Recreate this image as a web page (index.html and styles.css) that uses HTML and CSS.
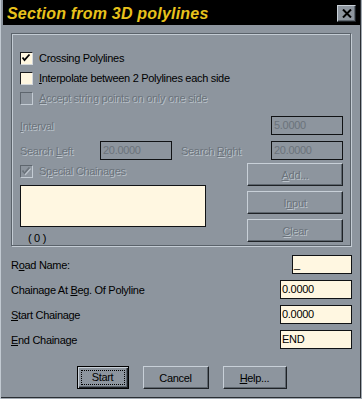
FILE: index.html
```html
<!DOCTYPE html>
<html lang="en">
<head>
    <meta charset="UTF-8">
    <meta name="viewport" content="width=device-width, initial-scale=1.0">
    <title>Section from 3D polylines</title>
    <link rel="stylesheet" href="styles.css">
</head>
<body>
    <div class="window">
        <div class="titlebar">
            <span class="title">Section from 3D polylines</span>
            <button class="close" type="button" aria-label="Close">
                <svg width="10" height="9" viewBox="0 0 10 9"><path d="M1 0.5 L9 8.5 M9 0.5 L1 8.5" stroke="#000" stroke-width="2" fill="none"/></svg>
            </button>
        </div>

        <div class="content">
            <div class="group">
                <div class="check-row">
                    <span class="box"><svg width="11" height="11" viewBox="0 0 11 11"><polyline points="1.5,4.5 3.5,7 8.5,1.5" stroke="#000" stroke-width="1.8" fill="none"/></svg></span>
                    <span>Crossing Polylines</span>
                </div>
                <div class="check-row">
                    <span class="box"></span>
                    <span><u>I</u>nterpolate between 2 Polylines each side</span>
                </div>
                <div class="check-row dis">
                    <span class="box box-dis"></span>
                    <span><u>A</u>ccept string points on only one side</span>
                </div>

                <div class="field-grid">
                    <span class="dis"><u>I</u>nterval</span>
                    <span></span>
                    <span></span>
                    <span class="inp inp-dis">5.0000</span>

                    <span class="dis">Search <u>L</u>eft</span>
                    <span class="inp inp-dis">20.0000</span>
                    <span class="dis right-label">Search <u>R</u>ight</span>
                    <span class="inp inp-dis">20.0000</span>
                </div>

                <div class="lower">
                    <div class="lower-left">
                        <div class="check-row special dis">
                            <span class="box box-dis"><svg width="11" height="11" viewBox="0 0 11 11"><polyline points="2.5,5.5 4.5,8 9.5,2.5" stroke="#bcc4cc" stroke-width="1.8" fill="none"/><polyline points="1.5,4.5 3.5,7 8.5,1.5" stroke="#6b737b" stroke-width="1.8" fill="none"/></svg></span>
                            <span>S<u>p</u>ecial Chainages</span>
                        </div>
                        <div class="listbox"></div>
                        <div class="count">( 0 )</div>
                    </div>
                    <div class="lower-right">
                        <button class="btn dis" type="button"><u>A</u>dd...</button>
                        <button class="btn dis" type="button">I<u>n</u>put</button>
                        <button class="btn dis" type="button"><u>C</u>lear</button>
                    </div>
                </div>
            </div>

            <div class="form-rows">
                <div class="form-row">
                    <span>R<u>o</u>ad Name:</span>
                    <span class="inp inp-short">_</span>
                </div>
                <div class="form-row">
                    <span>Chainage At <u>B</u>eg. Of Polyline</span>
                    <span class="inp">0.0000</span>
                </div>
                <div class="form-row">
                    <span><u>S</u>tart Chainage</span>
                    <span class="inp">0.0000</span>
                </div>
                <div class="form-row">
                    <span><u>E</u>nd Chainage</span>
                    <span class="inp">END</span>
                </div>
            </div>

            <div class="actions">
                <button class="btn btn-default btn-start" type="button"><span class="focus">Start</span></button>
                <button class="btn btn-cancel" type="button">Cancel</button>
                <button class="btn btn-help" type="button"><u>H</u>elp...</button>
            </div>
        </div>
    </div>
</body>
</html>
```

FILE: styles.css
```css
html,
body {
    margin: 0;
    padding: 0;
}

body {
    background: #8d959e;
    font-family: "Liberation Sans", Arial, sans-serif;
    font-size: 11px;
    letter-spacing: -0.3px;
    color: #000;
}

.window {
    width: 362px;
    height: 399px;
    box-sizing: border-box;
    padding: 0 2px 2px 3px;
    box-shadow: inset 1px 0 0 #c2cad2, inset -1px -1px 0 #a2aab2, inset -2px -2px 0 #2a2e33;
}

.titlebar {
    height: 25px;
    background: #000;
    display: flex;
    justify-content: space-between;
    align-items: flex-start;
    padding-left: 4px;
    overflow: hidden;
}

.title {
    font-weight: bold;
    font-style: italic;
    font-size: 16px;
    letter-spacing: 0.2px;
    line-height: 25px;
    margin-top: 1px;
    color: #e8c21c;
}

.close {
    width: 19px;
    height: 17px;
    margin: 5px 4px 0 0;
    padding: 0;
    box-sizing: border-box;
    background: #8d959e;
    border: 1px solid;
    border-color: #c8d0d8 #1e2226 #1e2226 #c8d0d8;
    box-shadow: inset -1px -1px 0 #5e666e;
    display: flex;
    align-items: center;
    justify-content: center;
}

.content {
    padding: 8px 8px 0 8px;
}

.group {
    margin-right: 1px;
    border: 1px solid #5a626a;
    box-shadow: inset 1px 1px 0 #c4ccd4, 1px 1px 0 #c4ccd4;
    padding: 14px 7px 1px 8px;
}

.check-row {
    height: 20px;
    display: flex;
    align-items: center;
}

.box {
    width: 13px;
    height: 13px;
    box-sizing: border-box;
    border: 1px solid;
    border-color: #1a1c1f #d4d8dc #d4d8dc #1a1c1f;
    background: #fff7e1;
    margin-right: 6px;
    display: flex;
}

.box-dis {
    background: transparent;
    border-color: #5e666e #c4ccd4 #c4ccd4 #5e666e;
}

.dis {
    color: #6b737b;
    text-shadow: 1px 1px 0 #bcc4cc;
}

.field-grid {
    margin-top: 8px;
    display: grid;
    grid-template-columns: 80px 72px 1fr 72px;
    grid-auto-rows: 19px;
    row-gap: 6px;
    align-items: center;
}

.right-label {
    padding-left: 9px;
}

.inp {
    box-sizing: border-box;
    height: 19px;
    line-height: 17px;
    border: 1px solid #101214;
    background: #fff7e1;
    padding: 0 1px;
    width: 72px;
}

.inp-dis {
    background: transparent;
    color: #6b737b;
    padding-left: 2px;
}

.inp-short {
    width: 60px;
}

.lower {
    margin-top: 3px;
    display: grid;
    grid-template-columns: 186px 1fr 96px;
}

.lower-left {
    grid-column: 1;
}

.lower-right {
    grid-column: 3;
    display: flex;
    flex-direction: column;
    gap: 5px;
}

.check-row.special {
    height: 16px;
}

.listbox {
    margin-top: 6px;
    height: 42px;
    box-sizing: border-box;
    border: 1px solid #101214;
    background: #fff7e1;
}

.count {
    margin-top: 5px;
    margin-left: 8px;
    height: 12px;
    line-height: 12px;
}

.btn {
    height: 23px;
    box-sizing: border-box;
    padding: 0;
    background: #8d959e;
    border: 1px solid;
    border-color: #c8d0d8 #1e2226 #1e2226 #c8d0d8;
    box-shadow: inset -1px -1px 0 #5e666e;
    font: inherit;
    letter-spacing: inherit;
    color: #000;
}

.btn.dis {
    color: #6b737b;
}

.form-rows {
    margin-top: 6px;
}

.form-row {
    height: 25px;
    display: flex;
    align-items: center;
    justify-content: space-between;
}

.actions {
    margin-top: 14px;
    display: flex;
    justify-content: center;
    gap: 14px;
}

.btn-default {
    border: 1px solid #000;
    box-shadow: inset 1px 1px 0 #c8d0d8, inset -1px -1px 0 #1e2226, inset -2px -2px 0 #5e666e;
    padding: 3px;
}

.focus {
    display: block;
    height: 100%;
    box-sizing: border-box;
    outline: 1px dotted #000;
    outline-offset: -1px;
    line-height: 15px;
}

.btn-start {
    width: 52px;
}

.btn-cancel {
    width: 66px;
}

.btn-help {
    width: 64px;
}
```
